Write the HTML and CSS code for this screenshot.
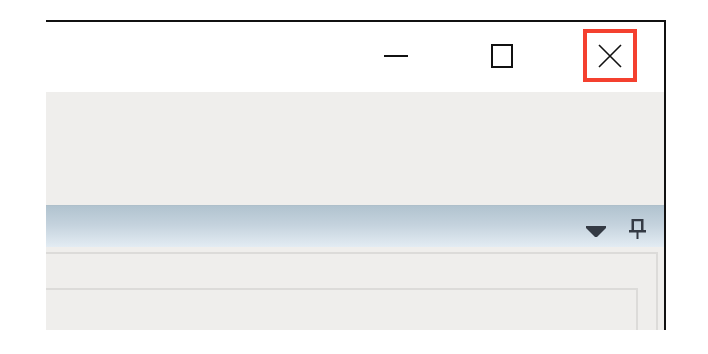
FILE: index.html
```html
<!DOCTYPE html>
<html>
<head>
<meta charset="utf-8">
<link rel="stylesheet" href="styles.css">
</head>
<body>
<div class="window">
  <div class="titlebar">
    <div class="btn btn-min">
      <svg width="24" height="4" viewBox="0 0 24 4"><line x1="0" y1="2" x2="24" y2="2" stroke="#111" stroke-width="2"/></svg>
    </div>
    <div class="btn btn-max">
      <svg width="22" height="24" viewBox="0 0 22 24"><rect x="1" y="1" width="20" height="22" fill="none" stroke="#111" stroke-width="2"/></svg>
    </div>
    <div class="btn btn-close">
      <svg width="24" height="24" viewBox="0 0 24 24"><path d="M1 1 L23 23 M23 1 L1 23" stroke="#111" stroke-width="1.6" fill="none"/></svg>
    </div>
  </div>
  <div class="toolbar"></div>
  <div class="pane-header">
    <svg class="dd" width="20" height="11" viewBox="0 0 20 11"><path d="M0 0 H20 V2 L11 11 H9 L0 2 Z" fill="#343a44"/></svg>
    <svg class="pin" width="18" height="20" viewBox="0 0 18 20"><path d="M2.5 0 H14.5 V11 H17 V13.5 H9.5 V20 H7.5 V13.5 H0 V11 H2.5 Z M5 2.2 V11 H12 V2.2 Z" fill="#343a44" fill-rule="evenodd"/></svg>
  </div>
  <div class="pane-gap"></div>
  <div class="pane-body">
    <div class="outer">
      <div class="inner"></div>
    </div>
  </div>
</div>
</body>
</html>
```
FILE: styles.css
```css
html, body {
  margin: 0;
  padding: 0;
  background: #ffffff;
}
body {
  padding: 20px 0 0 46px;
  font-family: "Liberation Sans", Arial, sans-serif;
}
.window {
  width: 618px;
  height: 308px;
  border-top: 2px solid #111;
  border-right: 2px solid #111;
  display: flex;
  flex-direction: column;
  overflow: hidden;
}
.titlebar {
  height: 70px;
  background: #ffffff;
  display: flex;
  justify-content: flex-end;
  align-items: center;
  padding-right: 27px;
  flex-shrink: 0;
}
.btn {
  display: flex;
  align-items: center;
  justify-content: center;
}
.btn svg { display: block; }
.btn-min {
  width: 24px;
  margin-right: 83px;
  margin-top: -2px;
}
.btn-max {
  width: 22px;
  margin-right: 70px;
  margin-top: -3px;
}
.btn-close {
  width: 46px;
  height: 45px;
  border: 4px solid #f4402f;
  box-sizing: content-box;
  margin-top: -3px;
}
.toolbar {
  height: 113px;
  background: #efeeec;
  flex-shrink: 0;
}
.pane-header {
  height: 42px;
  background: linear-gradient(to bottom, #b1c3cf 0%, #c4d2dd 45%, #e3ecf3 100%);
  border-top: 1px solid #aebfca;
  box-sizing: border-box;
  display: flex;
  justify-content: flex-end;
  align-items: flex-start;
  padding-right: 17px;
  flex-shrink: 0;
}
.pane-header .dd {
  display: block;
  margin-top: 20px;
  margin-right: 23px;
}
.pane-header .pin {
  display: block;
  margin-top: 13px;
}
.pane-gap {
  height: 5px;
  background: #efeeec;
  flex-shrink: 0;
}
.pane-body {
  flex: 1;
  background: #efeeec;
  padding-right: 6px;
  display: flex;
}
.outer {
  flex: 1;
  border-top: 2px solid #dcdbd9;
  border-right: 2px solid #dcdbd9;
  padding-top: 34px;
  padding-right: 18px;
  display: flex;
}
.inner {
  flex: 1;
  border-top: 2px solid #dcdbd9;
  border-right: 2px solid #dcdbd9;
}
```
